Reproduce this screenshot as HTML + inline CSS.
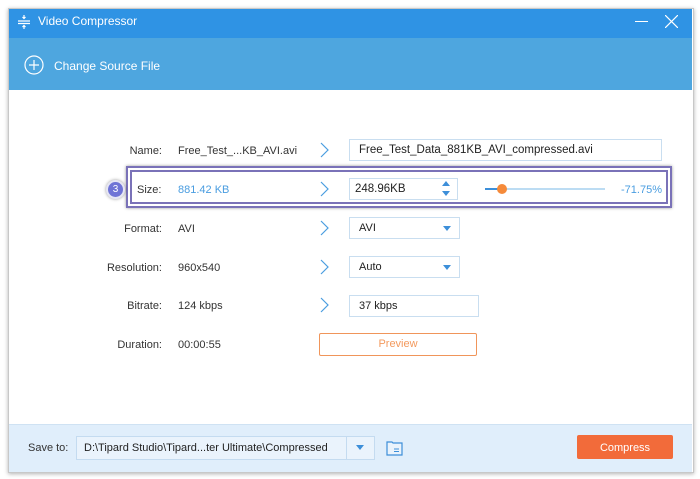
<!DOCTYPE html>
<html><head><style>
body{margin:0;width:700px;height:479px;background:#fff;font-family:"Liberation Sans",sans-serif;font-size:11px;color:#333;position:relative;overflow:hidden}
.a{position:absolute}
.win{left:8px;top:8px;width:684px;height:463px;border:1px solid #c8c8c8;box-shadow:0 1px 4px rgba(0,0,0,.3);background:#fff}
.lbl{position:absolute;width:80px;text-align:right;left:82px}
.val{position:absolute;left:178px}
.chev{position:absolute;left:318px}
.inp{position:absolute;border:1px solid #c9def0;background:#fff;box-sizing:border-box;padding-left:9px;line-height:20px;color:#222}
.tri{position:absolute;right:6px;top:8px;width:0;height:0;border-left:4px solid transparent;border-right:4px solid transparent;border-top:5px solid #3d8fd9}
</style></head><body>
<div class="a win"></div>
<div class="a" style="left:9px;top:9px;width:683px;height:29px;background:#2f93e4"></div>
<div class="a" style="left:9px;top:38px;width:683px;height:52px;background:#4ea6df"></div>
<svg class="a" style="left:16px;top:14px" width="16" height="16"><g stroke="#fff" stroke-width="1.2" fill="none"><path d="M2 7h12M2 9.5h12M8 1v3M6.5 3l1.5 1.5L9.5 3M8 15v-3M6.5 13l1.5-1.5L9.5 13"/></g></svg>
<div class="a" style="left:38px;top:14px;color:#fff;font-size:12px">Video Compressor</div>
<div class="a" style="left:635px;top:21px;width:13px;height:1px;background:#fff"></div>
<svg class="a" style="left:665px;top:15px" width="13" height="13"><path d="M0 0L13 13M13 0L0 13" stroke="#fff" stroke-width="1.2"/></svg>
<svg class="a" style="left:24px;top:55px" width="20" height="20"><circle cx="10" cy="10" r="9" stroke="#fff" stroke-width="1.2" fill="none"/><path d="M10 5v10M5 10h10" stroke="#fff" stroke-width="1.2"/></svg>
<div class="a" style="left:54px;top:59px;color:#fff;font-size:12px">Change Source File</div>

<div class="lbl" style="top:145px">Name:</div><div class="val" style="top:145px">Free_Test_...KB_AVI.avi</div>
<svg class="chev" style="top:142px" width="12" height="16"><path d="M3 1l7 7-7 7" stroke="#4a9de0" fill="none" stroke-width="1.2"/></svg>
<div class="inp" style="left:349px;top:139px;width:313px;height:22px;font-size:11.5px">Free_Test_Data_881KB_AVI_compressed.avi</div>

<div class="a" style="left:126px;top:166px;width:546px;height:42px;border:2px solid #7a72b8;box-sizing:border-box;box-shadow:0 0 3px rgba(0,0,0,.4)"></div>
<div class="a" style="left:130px;top:170px;width:538px;height:34px;border:2px solid #7a72b8;box-sizing:border-box"></div>
<div class="a" style="left:106px;top:180px;width:15px;height:15px;border-radius:50%;background:#6f74d6;border:2px solid #e6e6f4;box-shadow:0 0 3px rgba(0,0,0,.4);color:#fff;font-size:10px;text-align:center;line-height:15px">3</div>
<div class="a" style="left:137px;top:184px">Size:</div><div class="val" style="top:184px;color:#4a9de0">881.42 KB</div>
<svg class="chev" style="top:181px" width="12" height="16"><path d="M3 1l7 7-7 7" stroke="#4a9de0" fill="none" stroke-width="1.2"/></svg>
<div class="inp" style="left:349px;top:178px;width:109px;height:22px;padding-left:5px;font-size:11.5px">248.96KB</div>
<div class="a" style="left:442px;top:181px;width:0;height:0;border-left:4px solid transparent;border-right:4px solid transparent;border-bottom:5px solid #3d8fd9"></div>
<div class="a" style="left:442px;top:191px;width:0;height:0;border-left:4px solid transparent;border-right:4px solid transparent;border-top:5px solid #3d8fd9"></div>
<div class="a" style="left:485px;top:188px;width:120px;height:2px;background:#bcdcf3"></div>
<div class="a" style="left:485px;top:188px;width:17px;height:2px;background:#3d8fd9"></div>
<div class="a" style="left:497px;top:184px;width:10px;height:10px;border-radius:50%;background:#f58a3a"></div>
<div class="a" style="left:610px;top:184px;width:52px;text-align:right;color:#4a9de0">-71.75%</div>

<div class="lbl" style="top:223px">Format:</div><div class="val" style="top:223px">AVI</div>
<svg class="chev" style="top:220px" width="12" height="16"><path d="M3 1l7 7-7 7" stroke="#4a9de0" fill="none" stroke-width="1.2"/></svg>
<div class="inp" style="left:349px;top:217px;width:111px;height:22px">AVI<div class="tri" style="right:8px"></div></div>

<div class="lbl" style="top:262px">Resolution:</div><div class="val" style="top:262px">960x540</div>
<svg class="chev" style="top:259px" width="12" height="16"><path d="M3 1l7 7-7 7" stroke="#4a9de0" fill="none" stroke-width="1.2"/></svg>
<div class="inp" style="left:349px;top:256px;width:111px;height:22px">Auto<div class="tri" style="right:8px"></div></div>

<div class="lbl" style="top:300px">Bitrate:</div><div class="val" style="top:300px">124 kbps</div>
<svg class="chev" style="top:297px" width="12" height="16"><path d="M3 1l7 7-7 7" stroke="#4a9de0" fill="none" stroke-width="1.2"/></svg>
<div class="inp" style="left:349px;top:295px;width:130px;height:22px">37 kbps</div>

<div class="lbl" style="top:339px">Duration:</div><div class="val" style="top:339px">00:00:55</div>
<div class="a" style="left:319px;top:333px;width:158px;height:23px;border:1px solid #f0955a;box-sizing:border-box;border-radius:2px;text-align:center;line-height:21px;color:#f39a5e">Preview</div>

<div class="a" style="left:9px;top:424px;width:683px;height:47px;background:#e0eefb;border-top:1px solid #cfe2f3"></div>
<div class="a" style="left:28px;top:442px">Save to:</div>
<div class="a" style="left:76px;top:436px;width:299px;height:24px;border:1px solid #c4dbf0;background:#eaf3fc;box-sizing:border-box"></div>
<div class="a" style="left:84px;top:442px;font-size:11px;color:#222">D:\Tipard Studio\Tipard...ter Ultimate\Compressed</div>
<div class="a" style="left:346px;top:437px;width:1px;height:22px;background:#c4dbf0"></div>
<div class="a" style="left:356px;top:445px;width:0;height:0;border-left:4px solid transparent;border-right:4px solid transparent;border-top:5px solid #3d8fd9"></div>
<svg class="a" style="left:386px;top:439px" width="18" height="17"><path d="M1 3h5l1 1h9v12H1z" fill="#eaf3fc" stroke="#3d8fd9" stroke-width="1.2"/><path d="M8 10h5M8 12.5h5" stroke="#3d8fd9"/></svg>
<div class="a" style="left:577px;top:435px;width:96px;height:24px;background:#f26b3a;border-radius:2px;color:#fff;text-align:center;line-height:26px;font-size:11px">Compress</div>
</body></html>
